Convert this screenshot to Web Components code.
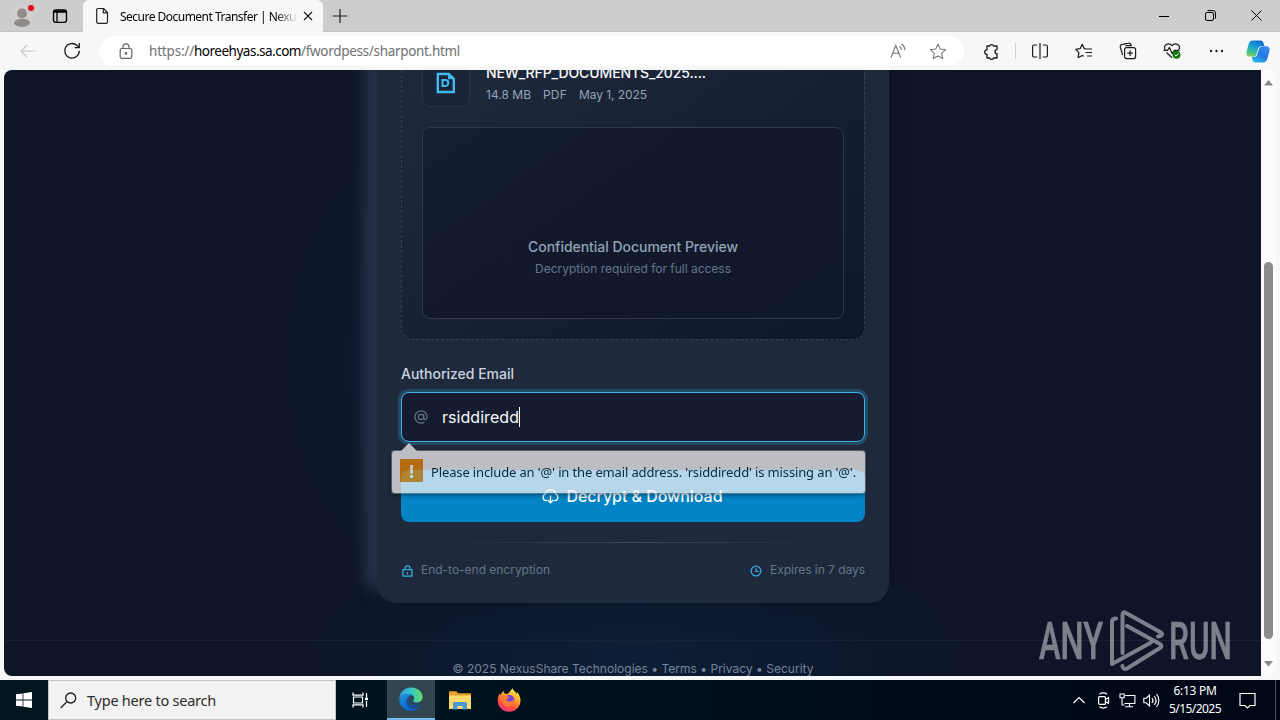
<!DOCTYPE html>
<html lang="en">
<head>
<meta charset="utf-8">
<title>Secure Document Transfer | NexusShare</title>
<style>
  html, body {
    margin: 0;
    height: 720px;
    overflow: hidden;
  }
  body {
    font-family: "Noto Sans", "Open Sans", sans-serif;
    font-size: 12px;
    color: #1b1b1b;
    background: #f7f7f7;
  }
</style>
</head>
<body>
<desktop-screen></desktop-screen>

<script>
const ICONS = {
  profile: `<svg width="24" height="24"><circle cx="12" cy="12" r="12" fill="#d2d0ce"/><circle cx="12" cy="9.5" r="5" fill="#8f8b88"/><path d="M4 20c0-4 3-5 8-5s8 1 8 5c-2 2-5 3-8 3s-6-1-8-3z" fill="#8f8b88"/><circle cx="21" cy="4" r="3.6" fill="#d9101c" stroke="#cdcdcd"/></svg>`,
  workspaces: `<svg width="16" height="16" fill="none" stroke="#000" stroke-width="1.3"><rect x="1.5" y="1.8" width="13" height="12.5" rx="2.2"/><path d="M2 3.5h12" stroke-width="2.600"/><path d="M5 4v10" /></svg>`,
  page: `<svg width="14" height="18" fill="none" stroke="#222" stroke-width="1.2" stroke-linejoin="round"><path d="M3 1.5h5.5l4 4V15a1.3 1.3 0 0 1-1.3 1.3H3A1.3 1.3 0 0 1 1.7 15V2.8A1.3 1.3 0 0 1 3 1.500z"/><path d="M8.300 1.800v4h4"/></svg>`,
  close: `<svg width="10" height="10" stroke="#222" stroke-width="1.300"><path d="M1 1l8 8M9 1L1 9"/></svg>`,
  plus: `<svg width="14" height="14" stroke="#222" stroke-width="1.2"><path d="M7 0v14M0 7h14"/></svg>`,
  minimize: `<svg width="10" height="10" stroke="#000"><path d="M0 5.5h10"/></svg>`,
  restore: `<svg width="11" height="11" fill="none" stroke="#000"><rect x=".5" y="2.500" width="8" height="8" rx="1.5"/><path d="M2.500 .6h5.5a2.500 2.500 0 0 1 2.500 2.500v5.500"/></svg>`,
  winclose: `<svg width="11" height="11" stroke="#000"><path d="M.5 .5l10 10M10.500 .5l-10 10"/></svg>`,
  back: `<svg width="16" height="14" fill="none" stroke="#c9c9c9" stroke-width="1.2"><path d="M16 7H1M7 1L1 7l6 6"/></svg>`,
  reload: `<svg width="18" height="18" fill="none" stroke="#1b1b1b" stroke-width="1.3"><path d="M16.300 8.800a7.300 7.300 0 1 1-2.300-5.300l1.800 1.700"/><path d="M16.300 1v4.600h-4.600"/></svg>`,
  lock: `<svg width="14" height="17" fill="none" stroke="#666" stroke-width="1.2"><rect x="1.200" y="5.500" width="11.600" height="9.800" rx="1.500"/><path d="M4 5.500V3.800a3 3 0 0 1 6 0v1.700"/><circle cx="7" cy="10.400" r=".7" fill="#666"/></svg>`,
  aloud: `<svg width="17" height="16" fill="none" stroke="#757575" stroke-width="1.1"><path d="M1 14.500L5.800 2.500l4.900 12M2.800 10.200h6.200M9.500 3.500c1.200.8 1.800 2 1.800 3.500M11.500 1c2 1.400 3.400 3.500 3.400 6.200"/></svg>`,
  star: `<svg width="18" height="17" fill="none" stroke="#757575" stroke-width="1.100" stroke-linejoin="round"><path d="M9 1.200l2.300 4.800 5.300.7-3.900 3.600 1 5.300L9 13l-4.700 2.600 1-5.300L1.400 6.700l5.300-.7z"/></svg>`,
  puzzle: `<svg width="17" height="17" fill="none" stroke="#1b1b1b" stroke-width="1.300" stroke-linejoin="round"><path d="M4 3h2.600a2.100 2.100 0 0 1 4 0H14v3.700a2 2 0 0 0 0 4V15h-3.400a2.100 2.100 0 0 1-4 0H4v-3.600a2.300 2.300 0 0 1 0-4.600z"/></svg>`,
  split: `<svg width="18" height="16" fill="none" stroke="#1b1b1b" stroke-width="1.200"><path d="M6.300 2H3.200a1.600 1.600 0 0 0-1.600 1.600v8.800A1.600 1.600 0 0 0 3.200 14h3.100M11.700 2h3.100a1.600 1.600 0 0 1 1.600 1.600v8.800a1.600 1.600 0 0 1-1.600 1.600h-3.100M9 0v16"/></svg>`,
  favorites: `<svg width="18" height="17" fill="none" stroke="#1b1b1b" stroke-width="1.200" stroke-linejoin="round"><path d="M11.500 6L9.300 5.700 7.200 1.200 5.100 5.700l-4.300.6 3.100 3.400-.8 5 4.100-2.300 1.500.9M10.500 6h6.500M10.500 9.500H17M12 13h5"/></svg>`,
  collections: `<svg width="18" height="18" fill="none" stroke="#1b1b1b" stroke-width="1.200"><rect x="5.600" y="5.600" width="11" height="11" rx="2"/><path d="M11.100 8.300v5.600M8.300 11.100h5.600M3.600 13L1.300 5.200a2 2 0 0 1 1.400-2.500l6.800-1.500A2 2 0 0 1 12 2.800l.2.800H6.500"/></svg>`,
  health: `<svg width="19" height="18" fill="none" stroke="#1b1b1b" stroke-width="1.200" stroke-linejoin="round"><path d="M2.200 8C-.3 3.500 5.500-.5 9 3.600c3.500-4.100 9.500 0 6.700 4.400M3.500 10.500L9 15.700"/><path d="M.5 8.400h4l2-3 2.800 6.300 2-3.300h5"/><circle cx="13.500" cy="12.800" r="4" fill="#107c10" stroke="none"/><path d="M11.600 12.800l1.400 1.300 2.500-2.600" stroke="#fff" stroke-width="1"/></svg>`,
  dots: `<svg width="15" height="4" fill="#222"><circle cx="2" cy="2" r="1.200"/><circle cx="7.500" cy="2" r="1.200"/><circle cx="13" cy="2" r="1.200"/></svg>`,
  copilot: `<svg width="24" height="23"><defs><linearGradient id="a" x1=".7" y1="0" x2=".3" y2="1"><stop offset="0" stop-color="#1769d0"/><stop offset=".4" stop-color="#149ed8"/><stop offset=".8" stop-color="#43c590"/><stop offset="1" stop-color="#8bcf62"/></linearGradient><linearGradient id="b" x1=".8" y1="0" x2=".2" y2="1"><stop offset="0" stop-color="#3b8cf4"/><stop offset=".5" stop-color="#2876e8"/><stop offset="1" stop-color="#27bbe7"/></linearGradient></defs><path d="M7 .5h7.500c2 0 2.600 1 3 2.500l.9 3H15c-1.500 0-2.200 1-2.700 2.500l-2 6c-.5 1.500-1.200 2-2.600 2H3.600C.9 16.500-.2 14.300.5 11.700l2.300-8C3.500 1.500 4.700.5 7 .5z" fill="url(#a)"/><path d="M17 22.500H9.500c-2 0-2.600-1-3-2.500l-.8-3h2.500c1.700 0 2.500-1 3-2.500l2.100-6C13.800 7 14.500 6.300 16 6.300h4.400c2.700 0 3.800 2.200 3.100 4.800l-2.300 8c-.7 2.400-1.900 3.400-4.200 3.400z" fill="url(#b)"/></svg>`,
  file: `<svg width="20" height="22" fill="none" stroke="#40b8f0" stroke-width="2.400"><path d="M1.800 2h11L17.800 6.800V20H1.800z"/><path d="M12 2v5.200h6z" fill="#40b8f0" stroke="none"/><path d="M6.500 8h2.800a3 3 0 0 1 0 6H6.500z" stroke-width="2.100"/></svg>`,
  at: `<svg width="14" height="14" fill="none" stroke="#64748b" stroke-width="1.200"><circle cx="7" cy="7" r="2.700"/><path d="M9.700 4.200v3.900c0 2.300 3.400 2.200 3.400-1.100A6.100 6.100 0 1 0 10.500 12"/></svg>`,
  cloud: `<svg width="17" height="15" fill="none" stroke="#fff" stroke-width="1.300"><path d="M5.200 11.600H4.400A3.300 3.300 0 0 1 3.300 5.200a5.300 5.300 0 0 1 10.400 0 3.300 3.300 0 0 1-1.100 6.400h-.8M8.500 6.500V14M5.800 11l2.700 2.800 2.700-2.800"/></svg>`,
  shieldlock: `<svg width="11" height="12" fill="none" stroke="#38a9e0" stroke-width="1.300"><path d="M1 4.700h9v6.500H1zM3 4.700V3.200a2.500 2.500 0 0 1 5 0v1.500M5.500 7v2.200"/></svg>`,
  clock: `<svg width="12" height="12" fill="none" stroke="#38a9e0" stroke-width="1.200"><circle cx="6" cy="6" r="4.900"/><path d="M6 3v3.300h2.700"/></svg>`,
  windows: `<svg width="16" height="16" fill="#fff"><path d="M0 2.300l6.600-.9v6.200H0zM7.400 1.300L16 .1v7.500H7.400zM0 8.400h6.600v6.200L0 13.700zM7.400 8.400H16v7.500l-8.600-1.200z"/></svg>`,
  search: `<svg width="17" height="17" fill="none" stroke="#1b1b1b" stroke-width="1.300"><circle cx="10.700" cy="6" r="5"/><path d="M7 9.600L.7 16"/></svg>`,
  taskview: `<svg width="17" height="16" fill="none" stroke="#fff" stroke-width="1.200"><path d="M1 .5v2.700h10V.5M1 15.500v-2.700h10v2.700M1.500 5h9v6h-9zM14.500 1v4M14.500 9v6"/><path d="M13 5.500h3v2.700h-3z" fill="#fff" stroke="none"/></svg>`,
  edge: `<svg width="24" height="24"><defs><linearGradient id="e1" x1="0" y1=".4" x2="1" y2=".3"><stop offset="0" stop-color="#2d9fe0"/><stop offset=".5" stop-color="#32c4cd"/><stop offset="1" stop-color="#6be05b"/></linearGradient><linearGradient id="e2" x1="0" y1="0" x2=".5" y2="1"><stop offset="0" stop-color="#1d99e0"/><stop offset="1" stop-color="#0b5fc0"/></linearGradient></defs><path d="M.4 10.500C1.300 4.600 6 .4 12 .4c6.700 0 11.600 4.500 11.600 9.400 0 3.600-2.700 5.700-5.600 5.700-2.500 0-3.900-.9-3.900-1.800 0-.7 1-1 1-2.700 0-2-2.300-4-5.400-4C5.600 7 2 8.300.4 10.500z" fill="url(#e1)"/><path d="M.4 10.500C2 8.100 5.600 7 9.200 7c2 0 4 .8 5 2-4.200-1-6.600 2-6.600 5.200 0 5 4.800 8.300 9.800 7.100.8-.2 1.600-.5 2-.3.5.2-2.900 2.900-7.400 2.900C5 23.900-.5 18.300.4 10.500z" fill="url(#e2)"/><path d="M9.300 10.200c-2.800 2.600-2.500 7 .2 9.500 3.600 3.200 9.600 1.800 12.500-1.900.4-.6-.1-.9-.7-.5-3.400 1.700-9.100.9-10.900-2.500-.9-1.700-.7-3.500.8-5-.6-.1-1.300 0-1.900.4z" fill="#174f9b"/></svg>`,
  explorer: `<svg width="22" height="19"><path d="M0 1.500C0 .7.500.3 1.200.3h6l2 2H21c.6 0 1 .4 1 1V18H0z" fill="#e7a02b"/><path d="M0 4.600h22V17c0 .7-.4 1-1 1H1c-.6 0-1-.3-1-1z" fill="#ffd870"/><path d="M4 18.500v-6c0-.8.600-1.400 1.400-1.400h11.200c.8 0 1.400.6 1.400 1.400v6h-4.500V15h-5v3.500z" fill="#4a9bd2"/></svg>`,
  firefox: `<svg width="24" height="24"><defs><linearGradient id="f1" x1=".8" y1="0" x2=".3" y2="1"><stop offset="0" stop-color="#fff04a"/><stop offset=".4" stop-color="#ffa42a"/><stop offset=".75" stop-color="#ff4747"/><stop offset="1" stop-color="#f0357e"/></linearGradient></defs><path d="M15.500.3c.5 2.300 3 3.500 4.300 5.500.3-.6.3-1.200.1-2 2.300 2.300 3.600 5.600 3.600 8.800A11.300 11.300 0 0 1 12.200 23.800C5.800 23.800.7 18.800.7 12.500c0-3 .8-5.400 2.300-7.200.1 1 .3 1.600.7 2 .5-1.900 1.500-3.300 3-4.300-.1 1.200.3 2.100 1.200 2.700h3c1.300-1.600 3-3 4.600-5.400z" fill="url(#f1)"/><circle cx="12.300" cy="12" r="5" fill="#7744d8"/><path d="M4 8c1.600-1.300 4-1 5.600.1 1 .6 2.200.6 3 .9-.3 1.300-2.900 1.200-3.100 2.700 1.500 3.300 5.800 2.300 7-.4.800 2.900-.7 6.800-4.800 7.400C7.200 19 4 15 4 8z" fill="#ff7a34"/></svg>`,
  chevron: `<svg width="12" height="8" fill="none" stroke="#fff" stroke-width="1.200"><path d="M.5 7L6 1.500 11.500 7"/></svg>`,
  camera: `<svg width="13" height="17" fill="none" stroke="#fff" stroke-width="1.200"><rect x="1.600" y="4.600" width="6.800" height="7.800" rx="1"/><path d="M8.400 7.500L11.500 5.500v6l-3.100-2M2.500 2.200C4.500.5 8 .5 10 2.200M2.500 14.800c2 1.700 5.500 1.700 7.500 0"/></svg>`,
  network: `<svg width="17" height="15" fill="none" stroke="#fff" stroke-width="1.100"><path d="M6.200 2.500h9.700v8H5.500M10.500 10.500v3M6 13.800h8"/><path d="M1 1h4.200v3.800H1zM3 4.800V12h2.500"/></svg>`,
  speaker: `<svg width="17" height="15" fill="none" stroke="#fff" stroke-width="1.100"><path d="M.8 5.200h2.400L6.500 2v11L3.200 9.800H.8zM9 5c1.300 1.500 1.300 3.500 0 5M11.200 3c2.300 2.700 2.300 6.300 0 9M13.500 1.200c3.200 3.600 3.200 9 0 12.600"/></svg>`,
  action: `<svg width="17" height="17" fill="none" stroke="#fff" stroke-width="1.200"><path d="M1 1.500h15v12h-5L8.500 16 6 13.500H1z"/></svg>`,
  up: `<svg width="9" height="6" fill="#868686"><path d="M4.500 0L9 5.500H0z"/></svg>`,
  down: `<svg width="9" height="6" fill="#868686"><path d="M4.500 5.500L9 0H0z"/></svg>`
}

// named glyph, centred in whatever box the host is given
class UiIcon extends HTMLElement {
  constructor() {
    super()
    this.attachShadow({ mode: 'open' })
  }

  connectedCallback() {
    this.shadowRoot.innerHTML = `
      <style>
        :host { display: inline-flex; align-items: center; justify-content: center; flex: none; }
        svg { display: block; overflow: visible; }
      </style>
      ${ICONS[this.getAttribute('name')] || ''}
    `
  }
}

// one line of text, tracked so that it fills the width in pixels
class FitText extends HTMLElement {
  constructor() {
    super()
    this.attachShadow({ mode: 'open' })
    this.shadowRoot.innerHTML = `
      <style>
        :host { display: block; white-space: nowrap; flex: none; }
        span { display: inline-block; vertical-align: top; }
      </style>
      <span><slot></slot></span>
    `
  }

  connectedCallback() {
    const width = Number(this.getAttribute('width'))
    const span = this.shadowRoot.querySelector('span')
    const natural = span.getBoundingClientRect().width
    const count = this.textContent.length
    if (!width || !natural) return
    span.style.letterSpacing = `${(width - natural) / count}px`
    this.style.width = `${width}px`
  }
}

class TabStrip extends HTMLElement {
  constructor() {
    super()
    this.attachShadow({ mode: 'open' })
    this.shadowRoot.innerHTML = `
      <style>
        :host { display: flex; height: 32px; background: #cdcdcd; box-sizing: border-box; border-bottom: 1px solid #c2c2c2; }
        .profile { width: 44px; }
        .spaces { width: 32px; }
        .tab {
          display: flex;
          align-items: center;
          width: 240px;
          height: 32px;
          margin-left: 7px;
          background: #f7f7f7;
          border-radius: 6px 6px 0 0;
        }
        .page { width: 37px; }
        .title {
          width: 179px;
          overflow: hidden;
          color: #000;
          -webkit-mask-image: linear-gradient(90deg, #000 155px, transparent 178px);
          mask-image: linear-gradient(90deg, #000 155px, transparent 178px);
        }
        .close { width: 17px; }
        .new { width: 34px; }
        .controls { display: flex; margin-left: auto; padding-right: 1px; }
        .controls ui-icon { width: 46px; }
      </style>
      <ui-icon class="profile" name="profile"></ui-icon>
      <ui-icon class="spaces" name="workspaces"></ui-icon>
      <div class="tab">
        <ui-icon class="page" name="page"></ui-icon>
        <div class="title"><fit-text width="176">Secure Document Transfer | Nexu</fit-text></div>
        <ui-icon class="close" name="close"></ui-icon>
      </div>
      <ui-icon class="new" name="plus"></ui-icon>
      <div class="controls">
        <ui-icon name="minimize"></ui-icon>
        <ui-icon name="restore"></ui-icon>
        <ui-icon name="winclose"></ui-icon>
      </div>
    `
  }
}

class ToolBar extends HTMLElement {
  constructor() {
    super()
    this.attachShadow({ mode: 'open' })
    this.shadowRoot.innerHTML = `
      <style>
        :host { display: flex; align-items: center; height: 38px; background: #f7f7f7; }
        .nav { width: 44px; }
        .back { width: 44px; margin-left: 6px; }
        .address {
          display: flex;
          align-items: center;
          width: 865px;
          height: 30px;
          margin-left: 5px;
          border-radius: 15px;
          background: #fff;
          font-size: 13.5px;
          color: #717171;
        }
        .lock { width: 54px; margin-right: -4px; }
        .host { color: #000; }
        .aloud { width: 40px; margin-left: auto; }
        .star { width: 40px; margin-right: 6px; }
        .ext { width: 44px; margin-left: 5px; }
        .sep { width: 1px; height: 16px; margin: 0 2px; background: #cfcfcf; }
        .copilot { width: 40px; }
      </style>
      <ui-icon class="back" name="back"></ui-icon>
      <ui-icon class="nav" name="reload"></ui-icon>
      <div class="address">
        <ui-icon class="lock" name="lock"></ui-icon>
        <fit-text width="45">https://</fit-text>
        <fit-text class="host" width="107">horeehyas.sa.com</fit-text>
        <fit-text width="159">/fwordpess/sharpont.html</fit-text>
        <ui-icon class="aloud" name="aloud"></ui-icon>
        <ui-icon class="star" name="star"></ui-icon>
      </div>
      <ui-icon class="ext" name="puzzle"></ui-icon>
      <div class="sep"></div>
      <ui-icon class="nav" name="split"></ui-icon>
      <ui-icon class="nav" name="favorites"></ui-icon>
      <ui-icon class="nav" name="collections"></ui-icon>
      <ui-icon class="nav" name="health"></ui-icon>
      <ui-icon class="nav" name="dots"></ui-icon>
      <ui-icon class="copilot" name="copilot"></ui-icon>
    `
  }
}

class ScrollTrack extends HTMLElement {
  constructor() {
    super()
    this.attachShadow({ mode: 'open' })
    this.shadowRoot.innerHTML = `
      <style>
        :host {
          display: flex;
          flex-direction: column;
          align-items: center;
          width: 15px;
          background: #fcfcfc;
          border-radius: 0 8px 8px 0;
        }
        .arrow { height: 25px; }
        .thumb { width: 9px; height: 377px; margin: 167px 0 12px; border-radius: 5px; background: #8b8b8b; }
      </style>
      <ui-icon class="arrow" name="up"></ui-icon>
      <div class="thumb"></div>
      <ui-icon class="arrow" name="down"></ui-icon>
    `
  }
}

class FileVault extends HTMLElement {
  constructor() {
    super()
    this.attachShadow({ mode: 'open' })
    this.shadowRoot.innerHTML = `
      <style>
        :host {
          display: flex;
          flex-direction: column;
          justify-content: flex-end;
          gap: 20px;
          box-sizing: border-box;
          height: 316px;
          padding: 20px;
          border: 1px dashed #334155;
          border-radius: 12px;
          background: linear-gradient(145deg, #1e293b 12%, #0f172a 100%);
        }
        .file { display: flex; align-items: center; gap: 16px; }
        .tile {
          box-sizing: border-box;
          width: 48px;
          height: 48px;
          border: 1px solid #28354a;
          border-radius: 8px;
          background: #192438;
        }
        .name { height: 22px; line-height: 22px; font-size: 14px; font-weight: 500; color: #f8fafc; }
        .meta { display: flex; gap: 12px; height: 20px; line-height: 22px; font-size: 12px; color: #94a3b8; }
        .preview {
          display: flex;
          flex-direction: column;
          align-items: center;
          justify-content: flex-end;
          box-sizing: border-box;
          height: 192px;
          padding-bottom: 38px;
          border: 1px solid #2d3a4c;
          border-radius: 8px;
          background: linear-gradient(145deg, #152033, #13192c 35%, #10182b);
        }
        .title { line-height: 22px; font-size: 14px; font-weight: 450; color: #94a3b8; }
        .note { line-height: 22px; font-size: 12px; color: #64748b; }
      </style>
      <div class="file">
        <ui-icon class="tile" name="file"></ui-icon>
        <div>
          <div class="name"><fit-text width="220">NEW_RFP_DOCUMENTS_2025....</fit-text></div>
          <div class="meta">
            <fit-text width="45">14.8 MB</fit-text>
            <fit-text width="24">PDF</fit-text>
            <fit-text width="68">May 1, 2025</fit-text>
          </div>
        </div>
      </div>
      <div class="preview">
        <fit-text class="title" width="210">Confidential Document Preview</fit-text>
        <fit-text class="note" width="196">Decryption required for full access</fit-text>
      </div>
    `
  }
}

class EmailField extends HTMLElement {
  constructor() {
    super()
    this.attachShadow({ mode: 'open' })
    this.shadowRoot.innerHTML = `
      <style>
        :host { display: block; position: relative; margin-top: 24px; }
        .label { height: 20px; line-height: 20px; font-size: 14px; font-weight: 500; color: #cbd5e1; }
        .input {
          display: flex;
          align-items: center;
          box-sizing: border-box;
          height: 50px;
          margin-top: 8px;
          border: 1px solid #43b0e6;
          border-radius: 8px;
          background: #151c30;
          box-shadow: 0 0 0 3px rgba(56, 189, 248, .22);
          font-size: 16px;
          color: #f8fafc;
        }
        .at { width: 38px; margin-right: 2px; }
        .caret { width: 1px; height: 20px; background: #fff; }
        /* validation bubble hangs below the input, over the button */
        .bubble {
          position: absolute;
          z-index: 2;
          left: -9px;
          top: 87px;
          display: flex;
          align-items: center;
          box-sizing: border-box;
          width: 473px;
          height: 42px;
          border-radius: 3px;
          background: #f8f6f6;
          opacity: .73;
          box-shadow: 0 0 0 1px rgba(138, 143, 150, .7), 0 2px 5px rgba(0, 0, 0, .6);
          font: 13px "Noto Sans", sans-serif;
          color: #000c18;
        }
        .bubble::before {
          content: "";
          position: absolute;
          left: 9px;
          top: -8px;
          border: solid transparent;
          border-width: 0 8px 8px;
          border-bottom-color: #f8f6f6;
        }
        .warn {
          display: flex;
          align-items: center;
          justify-content: center;
          width: 23px;
          height: 23px;
          margin: -3px 8px 0 8px;
          background: #ee8600;
          color: #fff;
          font: bold 18px "Noto Sans", sans-serif;
        }
      </style>
      <div class="label"><fit-text width="113">Authorized Email</fit-text></div>
      <div class="input">
        <ui-icon class="at" name="at"></ui-icon>
        <fit-text width="77">rsiddiredd</fit-text>
        <div class="caret"></div>
      </div>
      <div class="bubble">
        <div class="warn">!</div>
        <fit-text width="425">Please include an '@' in the email address. 'rsiddiredd' is missing an '@'.</fit-text>
      </div>
    `
  }
}

class TransferCard extends HTMLElement {
  constructor() {
    super()
    this.attachShadow({ mode: 'open' })
    this.shadowRoot.innerHTML = `
      <style>
        :host {
          display: block;
          position: relative;
          flex: none;
          box-sizing: border-box;
          width: 512px;
          height: 603px;
          margin-top: -70px;
        }
        :host::before {
          content: "";
          position: absolute;
          left: -14px;
          top: -40px;
          bottom: 12px;
          width: 200px;
          border-radius: 16px;
          background: #273349;
          filter: blur(7px);
        }
        .card {
          position: relative;
          box-sizing: border-box;
          height: 603px;
          padding: 24px;
          border-radius: 20px;
          background: #1e293b;
          box-shadow: 0 8px 24px rgba(6, 16, 30, .12);
        }
        .button {
          display: flex;
          align-items: center;
          justify-content: center;
          gap: 8px;
          box-sizing: border-box;
          height: 52px;
          margin-top: 28px;
          padding-right: 2px;
          border-radius: 8px;
          background: #0284c7;
          font-size: 16px;
          font-weight: 500;
          color: #fff;
        }
        .rule { height: 1px; margin-top: 20px; background: linear-gradient(90deg, transparent 8%, #3a485b 50%, transparent 92%); }
        .facts { display: flex; align-items: center; height: 20px; margin-top: 18px; line-height: 18px; font-size: 12px; color: #64748b; }
        .facts ui-icon { width: 13px; margin-right: 7px; }
        .facts fit-text { height: 20px; }
        .facts .right { width: 12px; margin-left: auto; margin-right: 8px; }
      </style>
      <div class="card">
        <file-vault></file-vault>
        <email-field></email-field>
        <div class="button"><ui-icon name="cloud"></ui-icon><fit-text width="156">Decrypt &amp; Download</fit-text></div>
        <div class="rule"></div>
        <div class="facts">
          <ui-icon name="shieldlock"></ui-icon><fit-text width="129">End-to-end encryption</fit-text>
          <ui-icon class="right" name="clock"></ui-icon><fit-text width="95">Expires in 7 days</fit-text>
        </div>
      </div>
    `
  }
}

class WaterMark extends HTMLElement {
  constructor() {
    super()
    this.attachShadow({ mode: 'open' })
    this.shadowRoot.innerHTML = `
      <style>
        :host { display: block; opacity: .48; }
        svg { display: block; overflow: visible; }
        text { font: 500 52px Roboto, sans-serif; fill: #f4f4f8; stroke: #f4f4f8; stroke-width: .5px; }
      </style>
      <svg width="204" height="64">
        <text x="1" y="50" textLength="64" lengthAdjust="spacingAndGlyphs">ANY</text>
        <text x="131" y="50" textLength="63" lengthAdjust="spacingAndGlyphs">RUN</text>
        <path fill="none" stroke="#f4f4f8" stroke-width="4" stroke-linecap="round" stroke-linejoin="round"
          d="M78 9.500Q74 9.500 74 13V55L113 33.500M84.500 44V6Q84.500 2 88 4L123 23.500Q126 26.500 120 27.500M89 17L122 35Q125 37 122 39L89 59.500Q85 61 84.500 57"/>
      </svg>
    `
  }
}

class PageView extends HTMLElement {
  constructor() {
    super()
    this.attachShadow({ mode: 'open' })
    this.shadowRoot.innerHTML = `
      <style>
        :host {
          display: flex;
          flex-direction: column;
          align-items: center;
          position: relative;
          box-sizing: border-box;
          width: 1257px;
          height: 606px;
          padding-left: 1px;
          overflow: hidden;
          border-radius: 8px 0 0 8px;
          font-family: Inter, sans-serif;
          background:
            radial-gradient(ellipse 340px 150px at 630px 590px, rgba(8, 50, 85, .32), transparent),
            radial-gradient(ellipse 120px 220px at 390px 290px, rgba(4, 46, 78, .2), transparent),
            #0e1528;
        }
        footer {
          display: flex;
          justify-content: center;
          width: 100%;
          margin-top: 37px;
          padding-top: 19px;
          border-top: 1px solid #172236;
          line-height: 18px;
          font-size: 12px;
          color: #75849a;
        }
        water-mark { position: absolute; left: 1034px; top: 539px; }
      </style>
      <transfer-card></transfer-card>
      <footer><fit-text width="361">© 2025 NexusShare Technologies • Terms • Privacy • Security</fit-text></footer>
      <water-mark></water-mark>
    `
  }
}

class TaskBar extends HTMLElement {
  constructor() {
    super()
    this.attachShadow({ mode: 'open' })
    this.shadowRoot.innerHTML = `
      <style>
        :host { display: flex; height: 40px; color: #fff; background: linear-gradient(90deg, #001720, #00121c 50%, #000a18 75%, #000717); }
        .cell { width: 48px; }
        .search {
          display: flex;
          align-items: center;
          box-sizing: border-box;
          width: 288px;
          border: 1px solid #c4c4c4;
          background: #f2f2f2;
          font-size: 14.5px;
          color: #2b2b2b;
        }
        .search ui-icon { width: 38px; }
        .app { width: 49px; }
        .active { width: 48px; box-sizing: border-box; margin-left: 2px; background: #30474f; border-bottom: 2px solid #76b9ed; }
        .tray { width: 24px; }
        .first { margin-left: auto; }
        .clock { display: flex; flex-direction: column; align-items: center; width: 64px; padding-top: 2px; line-height: 18px; }
        .action { width: 41px; }
        .show { width: 4px; margin-left: 7px; border-left: 1px solid #46505c; }
      </style>
      <ui-icon class="cell" name="windows"></ui-icon>
      <div class="search"><ui-icon name="search"></ui-icon><fit-text width="129">Type here to search</fit-text></div>
      <ui-icon class="app" name="taskview"></ui-icon>
      <ui-icon class="active" name="edge"></ui-icon>
      <ui-icon class="app" name="explorer"></ui-icon>
      <ui-icon class="app" name="firefox"></ui-icon>
      <ui-icon class="tray first" name="chevron"></ui-icon>
      <ui-icon class="tray" name="camera"></ui-icon>
      <ui-icon class="tray" name="network"></ui-icon>
      <ui-icon class="tray" name="speaker"></ui-icon>
      <div class="clock">
        <fit-text width="43">6:13 PM</fit-text>
        <fit-text width="52">5/15/2025</fit-text>
      </div>
      <ui-icon class="action" name="action"></ui-icon>
      <div class="show"></div>
    `
  }
}

class DesktopScreen extends HTMLElement {
  constructor() {
    super()
    this.attachShadow({ mode: 'open' })
    this.shadowRoot.innerHTML = `
      <style>
        :host { display: flex; flex-direction: column; width: 1280px; height: 720px; }
        .content { display: flex; height: 606px; padding: 0 4px 4px; }
      </style>
      <tab-strip></tab-strip>
      <tool-bar></tool-bar>
      <div class="content">
        <page-view></page-view>
        <scroll-track></scroll-track>
      </div>
      <task-bar></task-bar>
    `
  }
}

customElements.define('ui-icon', UiIcon)
customElements.define('tab-strip', TabStrip)
customElements.define('tool-bar', ToolBar)
customElements.define('scroll-track', ScrollTrack)
customElements.define('file-vault', FileVault)
customElements.define('email-field', EmailField)
customElements.define('transfer-card', TransferCard)
customElements.define('water-mark', WaterMark)
customElements.define('page-view', PageView)
customElements.define('task-bar', TaskBar)
customElements.define('desktop-screen', DesktopScreen)
// last, so every line is already in the tree when it gets measured
customElements.define('fit-text', FitText)
</script>
</body>
</html>
